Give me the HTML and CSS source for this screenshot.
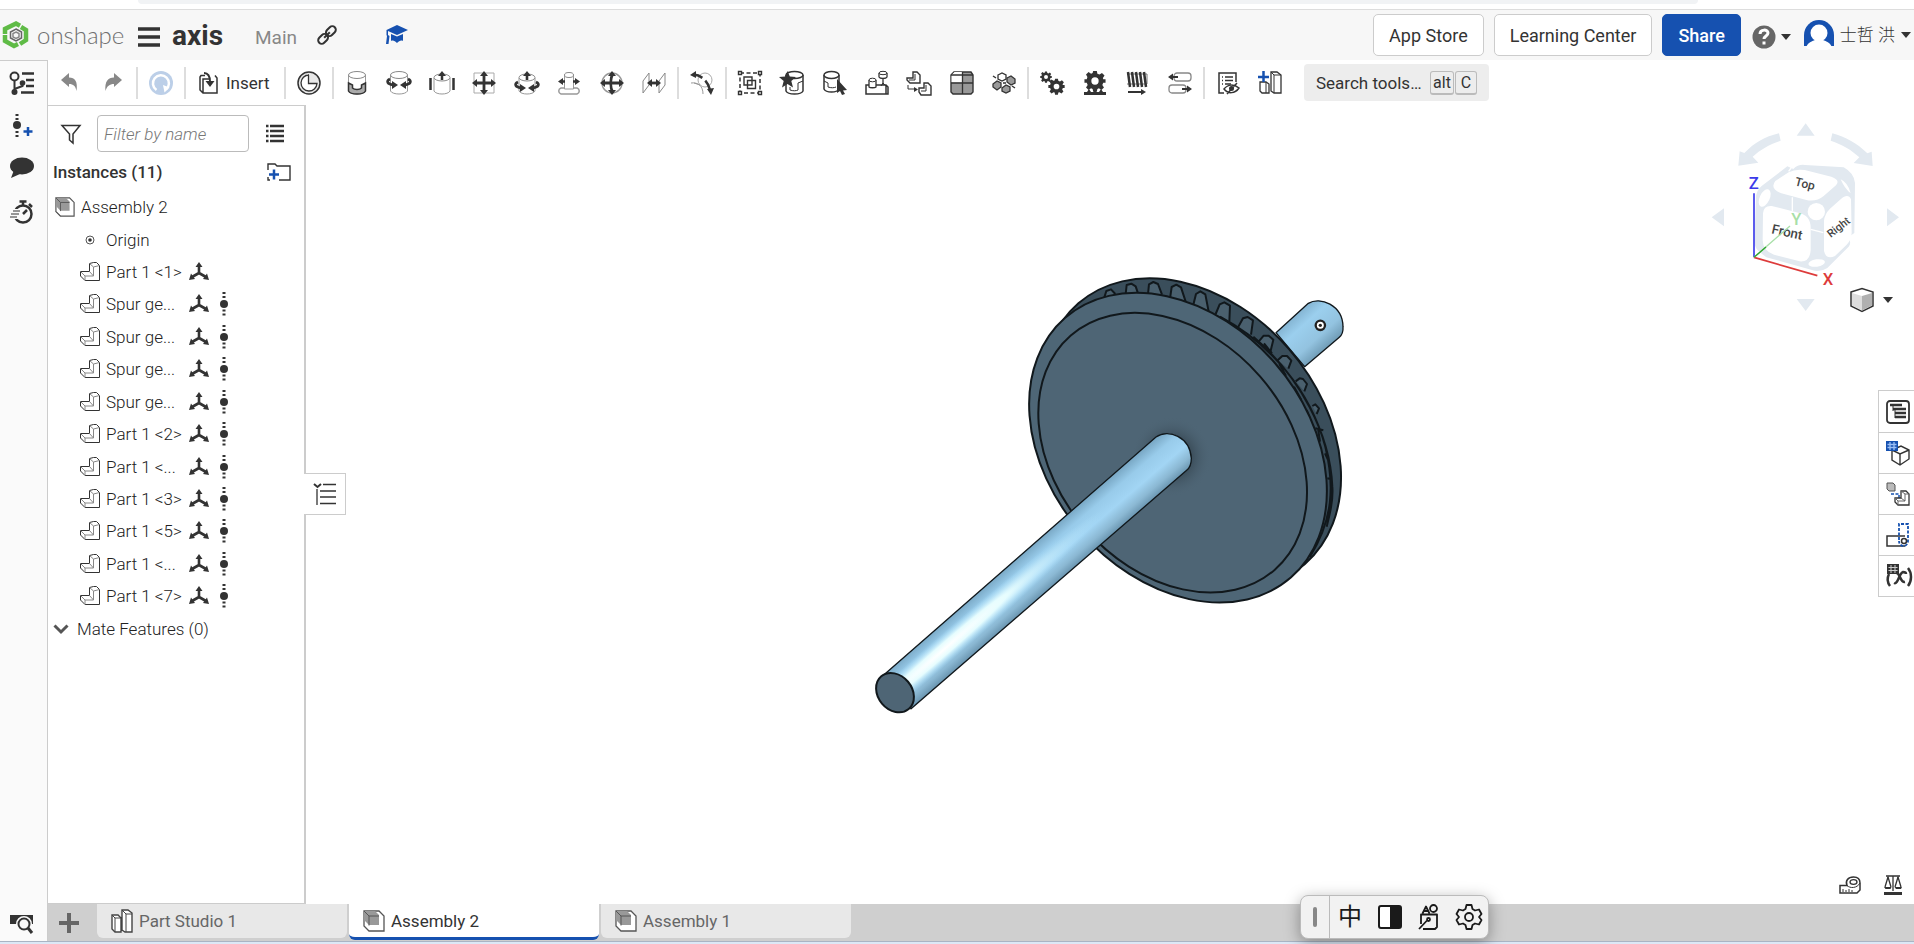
FILE: index.html
```html
<!DOCTYPE html>
<html lang="en">
<head>
<meta charset="utf-8">
<title>axis | Assembly 2</title>
<link rel="stylesheet" href="styles.css">
</head>
<body>
<svg class="defs" aria-hidden="true">
  <symbol id="i-lpart" viewBox="0 0 20 20"><path d="M.5 9.500H9.500V1.500L13.500.5h3L19.500 3.500v15H5L.5 14z" fill="#fff" stroke="#333"/><path d="M.5 9.500L5 14h8.500V5L9.500 1.500M13.500 5l6-1.500M5 14v4.500M13.500 14l-4-4.500" fill="none" stroke="#888"/></symbol>
  <symbol id="i-axes" viewBox="0 0 20 20"><path d="M10 3v9M10 11l-7 4M10 11l7 4" fill="none" stroke="#333" stroke-width="2.600"/><path d="M10 0l3.500 5h-7zM0 18l2-6.500 4 5.500zM20 18l-2-6.500-4 5.500z" fill="#333"/></symbol>
  <symbol id="i-dots" viewBox="0 0 10 24"><circle cx="5" cy="12" r="4" fill="#333"/><path d="M3.500 1h3M3.500 5h3M3.500 18.500h3M3.500 22.500h3" stroke="#333" stroke-width="2"/></symbol>
  <symbol id="i-asm" viewBox="0 0 22 22"><path d="M1 1h15l5 5v15H6l-5-5z" fill="#fff" stroke="#555" stroke-width="1.300"/><path d="M1 1h11l4 4v10H6l-5-5z" fill="#999"/><path d="M1 1l5 5h10M6 6v9.500M1 16l5 5" fill="none" stroke="#555"/></symbol>
  <symbol id="i-studio" viewBox="0 0 22 24"><path d="M1 6h6l3 3v14H4l-3-3zM11 1h6l4 3v19h-7l-3-2z" fill="#fff" stroke="#444" stroke-width="1.400"/><path d="M1 6l3 3h6M4 9v14M11 1l4 4h6M15 5v18" fill="none" stroke="#444"/></symbol>
  <symbol id="i-caret" viewBox="0 0 10 6"><path d="M0 0h10L5 6z" fill="#333"/></symbol>
  <symbol id="i-gear" viewBox="-12 -12 24 24"><path fill-rule="evenodd" d="M-2-11h4l.6 3 2.300 1 2.700-1.800 2.800 2.800L8.600-3.300 9-2h2.500v4H9l-1 2.300 1.800 2.700L7 9.800 4.300 8 2.600 8.600 2 11.500h-4l-.6-2.900L-4.300 8-7 9.800-9.800 7-8 4.300-9 2h-2.500v-4H-9l.7-2.300L-9.800-7-7-9.800-4.300-8l1.700-.6zM0-4a4 4 0 100 8 4 4 0 000-8z" fill="#333"/></symbol>
</svg>

<div class="app">
  <div class="browser-edge"><div class="browser-pill"></div></div>

  <header class="header">
    <a class="logo" href="#" aria-label="onshape">
      <svg width="26" height="28" viewBox="0 0 26 28"><g fill="none" stroke="#5fbb46" stroke-width="4.500"><path d="M2 13V8l11-5.500 4 2.200"/><path d="M2 14v6l9 5 4-2"/><path d="M18 6l5 3v10l-6 4"/></g><path d="M13 8l5.500 3v6L13 20l-5.500-3v-6z" fill="none" stroke="#666" stroke-width="1.500"/><path d="M13 11l3 1.500v3.500l-3 1.500-3-1.500v-3.500z" fill="none" stroke="#888" stroke-width="1.500"/></svg>
      <span>onshape</span>
    </a>
    <button class="icon-btn menu" aria-label="Menu"><svg width="22" height="20" viewBox="0 0 22 20"><path d="M0 2h22M0 10h22M0 18h22" stroke="#333" stroke-width="3.500"/></svg></button>
    <h1 class="doc-name">axis</h1>
    <span class="branch">Main</span>
    <button class="icon-btn link" aria-label="Copy link"><svg width="20" height="20" viewBox="0 0 20 20"><g fill="none" stroke="#333" stroke-width="2" transform="rotate(-45 10 10)"><rect x="-1" y="6.500" width="11" height="7" rx="3.500"/><rect x="10" y="6.500" width="11" height="7" rx="3.500"/><path d="M6 10h8"/></g></svg></button>
    <button class="icon-btn edu" aria-label="Education"><svg width="22" height="20" viewBox="0 0 22 20"><path d="M11 0l11 5-11 5L2 6v4l1.500 1-1 8H0l1-8-.5-1V5zM5 9l6 2.500L17 9v7c-2-1-4 0-6 2-2-2-4-3-6-2z" fill="#1651b0"/></svg></button>
    <div class="header-right">
      <button class="btn">App Store</button>
      <button class="btn">Learning Center</button>
      <button class="btn primary">Share</button>
      <button class="icon-btn help" aria-label="Help"><svg width="24" height="24" viewBox="0 0 24 24"><circle cx="12" cy="12" r="11.500" fill="#666"/><path d="M8 9c0-5 8-5 8-1 0 3-4 3-4 6" fill="none" stroke="#fff" stroke-width="3"/><path d="M10.500 16.500h3v3h-3z" fill="#fff"/></svg><svg width="10" height="6"><use href="#i-caret"/></svg></button>
      <button class="icon-btn account"><svg width="30" height="30" viewBox="0 0 30 30"><path d="M0 26V15a15 15 0 0130 0v11z" fill="#1651b0"/><circle cx="15" cy="13" r="8.500" fill="#fff"/><path d="M2 28c1-5 6-7 9-8h8c3 1 8 3 9 8l-5 2H7z" fill="#fff"/></svg><span>士哲 洪</span><svg width="10" height="6"><use href="#i-caret"/></svg></button>
    </div>
  </header>

  <div class="workspace">
    <nav class="rail">
      <button class="icon-btn" aria-label="Versions"><svg width="26" height="24" viewBox="0 0 26 24"><g fill="none" stroke="#333" stroke-width="2"><circle cx="5.500" cy="5.500" r="4"/><path d="M5.500 10v12M5.500 18l8-3v-4"/></g><circle cx="5.500" cy="21" r="3" fill="#333"/><circle cx="13.500" cy="12" r="2.800" fill="#333"/><path d="M13 2.500h12M17 9h8M17 15h8M12 21.500h13" stroke="#333" stroke-width="2.500"/></svg></button>
      <button class="icon-btn" aria-label="Add mate"><svg width="22" height="24" viewBox="0 0 22 24"><circle cx="6" cy="11" r="4" fill="#333"/><path d="M4.500 1h3M4.500 5h3M4.500 18h3M4.500 22h3" stroke="#333" stroke-width="2"/><path d="M12.500 17.500h9M17 13v9" stroke="#1651b0" stroke-width="2.500"/></svg></button>
      <button class="icon-btn" aria-label="Comments"><svg width="24" height="22" viewBox="0 0 24 22"><ellipse cx="12" cy="9" rx="12" ry="8.500" fill="#333"/><path d="M4 13l-3 8 9-4z" fill="#333"/></svg></button>
      <button class="icon-btn" aria-label="History"><svg width="24" height="26" viewBox="0 0 24 26"><circle cx="13" cy="16" r="8.500" fill="none" stroke="#333" stroke-width="2.500"/><path d="M9.500 3.500h7M13 4v4M19 6l3 3M13 16l4-4" stroke="#333" stroke-width="2.500"/><path d="M2 13h8M1 16h8M0 19h8" stroke="#fafafa" stroke-width="4"/><path d="M3 13h7M1 16h8M0 19h7" stroke="#333" stroke-width="1.200"/></svg></button>
      <button class="icon-btn last" aria-label="Search tabs"><svg width="24" height="20" viewBox="0 0 24 20"><path d="M0 1h23v9H0z" fill="#333"/><circle cx="14" cy="10" r="5.500" fill="#fafafa" stroke="#fafafa" stroke-width="5"/><circle cx="14" cy="10" r="5.500" fill="none" stroke="#333" stroke-width="2"/><path d="M18 14l4 5" stroke="#333" stroke-width="3"/></svg></button>
    </nav>

    <div class="stage">
      <div class="toolbar">
        <div class="tool-group history">
          <button class="tool" aria-label="Undo"><svg viewBox="0 0 24 24"><path d="M4 9l8-7v4.500c6 0 9 4 7.500 13.500-1-5-3-7-7.500-7V16z" fill="#888"/></svg></button>
          <button class="tool" aria-label="Redo"><svg viewBox="0 0 24 24"><path d="M21 9l-8-7v4.500c-6 0-9.500 4-8.500 13.500 1.500-5 4-7 8.500-7V16z" fill="#888"/></svg></button>
        </div>
        <span class="sep"></span>
        <button class="tool" aria-label="Update"><svg viewBox="0 0 24 24"><circle cx="12" cy="12" r="12" fill="#bccfe8"/><path d="M7.500 19A8 8 0 1117 18.500" fill="none" stroke="#fff" stroke-width="2.500"/><path d="M14 14l6.500 2.500-5 5z" fill="#fff"/></svg></button>
        <span class="sep"></span>
        <button class="insert"><svg width="20" height="22" viewBox="0 0 20 22"><path d="M6 3.500H2L1 5v13l3 3h14V6l-2-2.500M4 21V7h6" fill="none" stroke="#333" stroke-width="1.500"/><path d="M5 1c5 0 6 4 6 9" fill="none" stroke="#333" stroke-width="2"/><path d="M6.500 9h9L11 15z" fill="#333"/></svg><span>Insert</span></button>
        <span class="sep"></span>
        <button class="tool" aria-label="Animate"><svg viewBox="0 0 24 24"><circle cx="12" cy="12" r="11" fill="#e8e8e8" stroke="#333" stroke-width="1.500"/><path d="M12 4a8 8 0 108 8.500H11.500V4z" fill="#fff" stroke="#333" stroke-width="1.300"/></svg></button>
        <span class="sep"></span>
        <div class="tool-group mates">
          <button class="tool" aria-label="Fastened mate"><svg viewBox="0 0 24 24"><path d="M3.500 4v16c2 4 15 4 17 0V4" fill="#fff" stroke="#999"/><ellipse cx="12" cy="4" rx="8.500" ry="3.500" fill="#fff" stroke="#888"/><path d="M3.500 12l4 2v3c2 2 7 2 9 0v-3l4-2v8c-2 4-15 4-17 0z" fill="#aaa" stroke="#333" stroke-width="1.500"/></svg></button>
          <button class="tool" aria-label="Revolute mate"><svg viewBox="0 0 24 24"><path d="M3.500 4v16c2 4 15 4 17 0V4" fill="#fff" stroke="#999"/><ellipse cx="12" cy="4" rx="8.500" ry="3.500" fill="#fff" stroke="#888"/><path d="M3 8c-4 2-3 5 3 6M21 8c4 2 3 5-3 6" fill="none" stroke="#333" stroke-width="2.600"/><path d="M5 10l6 4-6 4zM19 10l-6 4 6 4z" fill="#333"/></svg></button>
          <button class="tool" aria-label="Slider mate"><svg viewBox="0 0 24 24"><path d="M4 7v13c2 4 14 4 16 0V7" fill="#fff" stroke="#999"/><ellipse cx="12" cy="6.500" rx="8" ry="3.500" fill="#fff" stroke="#888"/><path d="M.5 7v12M23.500 7v12M12 3v6" stroke="#333" stroke-width="2.500"/><path d="M12 0l4 5H8z" fill="#333"/></svg></button>
          <button class="tool" aria-label="Planar mate"><svg viewBox="0 0 24 24"><path d="M2 2h20v20H2z" fill="none" stroke="#aaa"/><path d="M12 3v18M3 12h18" stroke="#333" stroke-width="2.800"/><path d="M12 0l4 5H8zM12 24l4-5H8zM0 12l5-4v8zM24 12l-5-4v8z" fill="#333"/></svg></button>
          <button class="tool" aria-label="Cylindrical mate"><svg viewBox="0 0 24 24"><path d="M4 7v13c2 4 14 4 16 0V7" fill="#fff" stroke="#999"/><ellipse cx="12" cy="6.500" rx="8" ry="3.500" fill="#fff" stroke="#888"/><path d="M12 3v6M3 11c-4 2-3 5 3 6M21 11c4 2 3 5-3 6" fill="none" stroke="#333" stroke-width="2.600"/><path d="M12 0l4 5H8zM5 13l6 4-6 4zM19 13l-6 4 6 4z" fill="#333"/></svg></button>
          <button class="tool" aria-label="Pin slot mate"><svg viewBox="0 0 24 24"><path d="M7.500 4v14h9V4" fill="#fff" stroke="#999"/><ellipse cx="12" cy="4" rx="4.500" ry="2.500" fill="#fff" stroke="#888"/><path d="M7.500 17H4c-3 1-3 5 0 6h16c3-1 3-5 0-6h-3.500" fill="none" stroke="#999" stroke-width="1.500"/><path d="M3 10.500h5M16 10.500h5" stroke="#333" stroke-width="2.500"/><path d="M1 10.500l5-3.500v7zM23 10.500l-5-3.500v7z" fill="#333"/></svg></button>
          <button class="tool" aria-label="Ball mate"><svg viewBox="0 0 24 24"><circle cx="12" cy="12" r="10" fill="none" stroke="#999" stroke-width="1.500"/><path d="M13 2c-3 6-3 14 0 20M2 12h20" fill="none" stroke="#333" stroke-width="2.800"/><path d="M12 0l4 5H8zM12 24l4-5H8zM0 12l5-4v8zM24 12l-5-4v8z" fill="#333"/></svg></button>
          <button class="tool" aria-label="Parallel mate"><svg viewBox="0 0 24 24"><path d="M1 10l6-8v12l-6 8zM17 10l6-8v12l-6 8z" fill="none" stroke="#888"/><path d="M8 12h8" stroke="#333" stroke-width="2.800"/><path d="M5 12l5-4v8zM19 12l-5-4v8z" fill="#333"/></svg></button>
        </div>
        <span class="sep"></span>
        <button class="tool" aria-label="Tangent mate"><svg viewBox="0 0 24 24"><circle cx="15" cy="9" r="7" fill="none" stroke="#aaa"/><path d="M1 12c7-1 12 3 12 11M4 12l6 2" fill="none" stroke="#999"/><path d="M3 4c6-1 15 5 17 15" fill="none" stroke="#333" stroke-width="2.500" stroke-dasharray="10 4"/><path d="M0 4l6-4v7zM21 24l-4-6 7-1z" fill="#333"/></svg></button>
        <span class="sep"></span>
        <div class="tool-group assembly">
          <button class="tool" aria-label="Group"><svg viewBox="0 0 24 24"><path d="M2 2h20v20H2z" fill="none" stroke="#333" stroke-width="1.500" stroke-dasharray="4 2.500"/><path d="M.5.5h3v3h-3zM20.500.5h3v3h-3zM.5 20.500h3v3h-3zM20.500 20.500h3v3h-3zM9.500 9.500h8v8h-8zM6 6h8v8H6z" fill="#fff" stroke="#333" stroke-width="1.400"/></svg></button>
          <button class="tool" aria-label="Mate connector"><svg viewBox="0 0 24 24"><path d="M6 4v16c2 4 15 4 17 0V4" fill="#fff" stroke="#333" stroke-width="1.500"/><ellipse cx="14.500" cy="4" rx="8.500" ry="3.500" fill="#fff" stroke="#333" stroke-width="1.500"/><path d="M10 16v3c3 1 6 1 8 0v-7l5-2" fill="none" stroke="#333"/><path d="M7.500 0l2.300 5.500 6.200.5-4.700 4L13 16.500l-5.500-3.500L2 16.500 3.700 10-1 6l6.200-.5z" fill="#333"/></svg></button>
          <button class="tool" aria-label="Select part"><svg viewBox="0 0 24 24"><path d="M1 4v14c2 4 13 4 15 0V4" fill="#fff" stroke="#333" stroke-width="1.500"/><ellipse cx="8.500" cy="4" rx="7.500" ry="3.500" fill="#fff" stroke="#333" stroke-width="1.500"/><path d="M1 10l4 2v4c3 1 6 1 8 0" fill="none" stroke="#333"/><path d="M14 8l10 11-4 .5 2 3.500-3 1-2-4-3 2z" fill="#333"/></svg></button>
          <button class="tool" aria-label="Snap mode"><svg viewBox="0 0 24 24"><path d="M1 14h20l2 2v7H1zM21 14v9" fill="#fff" stroke="#333" stroke-width="1.500"/><path d="M4 9v7c1 1 6 1 7 0V9M14 2v4c1 2 7 2 8 0V2M18 8v6" fill="#fff" stroke="#333" stroke-width="1.300"/><ellipse cx="7.500" cy="9" rx="3.500" ry="1.800" fill="#fff" stroke="#333"/><ellipse cx="18" cy="2" rx="4" ry="1.700" fill="#fff" stroke="#333"/><path d="M16 15l2-3 3 3" fill="none" stroke="#333"/></svg></button>
          <button class="tool" aria-label="Replicate"><svg viewBox="0 0 24 24"><g fill="#fff" stroke="#333" stroke-width="1.400"><path d="M0 7h6V1h4l3 3v8H3L0 9z"/><path d="M12 17h5v-5h4l3 3v9H14l-2-3z"/></g><path d="M8 3v6H2M19 14v6h-5M1 14v4h7" fill="none" stroke="#333"/><path d="M7 16l4 2.500L7 21z" fill="#333"/></svg></button>
          <button class="tool" aria-label="Linear pattern"><svg viewBox="0 0 24 24"><path d="M1 4l3-3h17l2 3v17l-2 2H3l-2-2z" fill="#999" stroke="#333" stroke-width="1.400"/><path d="M1.500 4l3-3h8v10.500h-11z" fill="#fff"/><path d="M1 12h22M12.500 1v22M1 4h22" fill="none" stroke="#333" stroke-width="1.300"/></svg></button>
          <button class="tool" aria-label="Circular pattern"><svg viewBox="0 0 24 24"><g fill="#999" stroke="#333" stroke-width="1.300"><path d="M1 13l4-3 4 2v4l-4 3-4-3zM10 17l4-3 4 2v4l-4 2-4-2zM15 7l4-2 4 3v4l-4 2-4-3z"/><path d="M6 4l4-2 4 2v4l-4 2-4-2z" fill="#fff"/></g><path d="M1 5l3 2M20 15l3 2M11 12h3" stroke="#333" stroke-width="1.500"/></svg></button>
        </div>
        <span class="sep"></span>
        <div class="tool-group relations">
          <button class="tool" aria-label="Gear relation"><svg viewBox="0 0 24 24"><use href="#i-gear" width="12" height="12"/><use href="#i-gear" x="8" y="7" width="17" height="17"/></svg></button>
          <button class="tool" aria-label="Rack and pinion"><svg viewBox="0 0 24 24"><use href="#i-gear" x="1" y="-1" width="22" height="22"/><path d="M1 24v-3h3l2-3 2 3h2l2-2 2 2h2l2-3 2 3h3v3z" fill="#333"/></svg></button>
          <button class="tool" aria-label="Screw relation"><svg viewBox="0 0 24 24"><path d="M2 3h20v10H2" fill="none" stroke="#777"/><path d="M3 1l2 15M7 1l2 15M11 1l2 15M15 1l2 15M19 1l2 15" stroke="#333" stroke-width="2.500"/><path d="M3 21h15" stroke="#333" stroke-width="2"/><path d="M16 18l5 3-5 3z" fill="#333"/></svg></button>
          <button class="tool" aria-label="Linear relation"><svg viewBox="0 0 24 24"><g fill="#fff" stroke="#888" stroke-width="1.300"><rect x="6" y="2" width="17" height="8" rx="3"/><rect x="1" y="14" width="17" height="8" rx="3"/></g><path d="M5 6h5M14 18h5" stroke="#333" stroke-width="2"/><path d="M0 6l5-3.500v7zM24 18l-5-3.500v7z" fill="#333"/></svg></button>
        </div>
        <span class="sep"></span>
        <div class="tool-group extras">
          <button class="tool" aria-label="Hide items"><svg viewBox="0 0 24 24"><path d="M8 22H3V2h17v9M6 6h1M6 9.500h1M6 13h1M9 6h8M9 9.500h8M9 13h6" fill="none" stroke="#333" stroke-width="1.500"/><path d="M8 18c4-5 10-5 15-1-4 6-11 6-15 1zM21 12L11 23" fill="none" stroke="#333" stroke-width="1.500"/><circle cx="15.500" cy="17.500" r="2.500" fill="#333"/></svg></button>
          <button class="tool" aria-label="New part studio"><svg viewBox="0 0 24 24"><path d="M2 11h6l3 2v9H4l-2-2zM13 1h6l4 3v18h-7l-3-2z" fill="#fff" stroke="#333" stroke-width="1.300"/><path d="M13 1l3 3h7M16 4v18M8 11v11" fill="none" stroke="#333"/><path d="M0 6h11M5.500 0v11" stroke="#1651b0" stroke-width="2.500"/></svg></button>
        </div>
        <button class="search"><span>Search tools…</span><kbd>alt</kbd><kbd>C</kbd></button>
      </div>

      <div class="editor">
        <aside class="panel">
          <div class="filter">
            <svg width="20" height="20" viewBox="0 0 20 20"><path d="M1 1.500h18l-7 8.500v9l-3.500-3V10z" fill="none" stroke="#333" stroke-width="1.500"/></svg>
            <input type="text" placeholder="Filter by name" aria-label="Filter by name">
            <button class="icon-btn" aria-label="List view"><svg width="18" height="20" viewBox="0 0 18 20"><path d="M0 2h2.500M0 7h2.500M0 12h2.500M0 17h2.500M4 2h14M4 7h14M4 12h14M4 17h14" stroke="#333" stroke-width="2.500"/></svg></button>
          </div>
          <div class="panel-title"><h2>Instances (11)</h2><button class="icon-btn" aria-label="New folder"><svg width="24" height="18" viewBox="0 0 24 18"><path d="M1 7V1h7l2 2h13v14H12M1 14v3h2" fill="none" stroke="#333" stroke-width="1.400"/><path d="M2 11.500h10M7 6.500v10" stroke="#1651b0" stroke-width="2.500"/></svg></button></div>
          <ul class="tree">
            <li><svg class="ic"><use href="#i-asm"/></svg><span>Assembly 2</span></li>
            <li class="child"><svg class="ic" viewBox="0 0 20 20"><circle cx="10" cy="10" r="4" fill="none" stroke="#555"/><circle cx="10" cy="10" r="1.800" fill="#333"/></svg><span class="name">Origin</span></li>
            <li class="child"><svg class="ic"><use href="#i-lpart"/></svg><span class="name">Part 1 &lt;1&gt;</span><svg class="ic"><use href="#i-axes"/></svg></li>
            <li class="child"><svg class="ic"><use href="#i-lpart"/></svg><span class="name">Spur ge...</span><svg class="ic"><use href="#i-axes"/></svg><svg class="dots"><use href="#i-dots"/></svg></li>
            <li class="child"><svg class="ic"><use href="#i-lpart"/></svg><span class="name">Spur ge...</span><svg class="ic"><use href="#i-axes"/></svg><svg class="dots"><use href="#i-dots"/></svg></li>
            <li class="child"><svg class="ic"><use href="#i-lpart"/></svg><span class="name">Spur ge...</span><svg class="ic"><use href="#i-axes"/></svg><svg class="dots"><use href="#i-dots"/></svg></li>
            <li class="child"><svg class="ic"><use href="#i-lpart"/></svg><span class="name">Spur ge...</span><svg class="ic"><use href="#i-axes"/></svg><svg class="dots"><use href="#i-dots"/></svg></li>
            <li class="child"><svg class="ic"><use href="#i-lpart"/></svg><span class="name">Part 1 &lt;2&gt;</span><svg class="ic"><use href="#i-axes"/></svg><svg class="dots"><use href="#i-dots"/></svg></li>
            <li class="child"><svg class="ic"><use href="#i-lpart"/></svg><span class="name">Part 1 &lt;...</span><svg class="ic"><use href="#i-axes"/></svg><svg class="dots"><use href="#i-dots"/></svg></li>
            <li class="child"><svg class="ic"><use href="#i-lpart"/></svg><span class="name">Part 1 &lt;3&gt;</span><svg class="ic"><use href="#i-axes"/></svg><svg class="dots"><use href="#i-dots"/></svg></li>
            <li class="child"><svg class="ic"><use href="#i-lpart"/></svg><span class="name">Part 1 &lt;5&gt;</span><svg class="ic"><use href="#i-axes"/></svg><svg class="dots"><use href="#i-dots"/></svg></li>
            <li class="child"><svg class="ic"><use href="#i-lpart"/></svg><span class="name">Part 1 &lt;...</span><svg class="ic"><use href="#i-axes"/></svg><svg class="dots"><use href="#i-dots"/></svg></li>
            <li class="child"><svg class="ic"><use href="#i-lpart"/></svg><span class="name">Part 1 &lt;7&gt;</span><svg class="ic"><use href="#i-axes"/></svg><svg class="dots"><use href="#i-dots"/></svg></li>
            <li class="mates-row"><svg width="16" height="10" viewBox="0 0 16 10"><path d="M1.500 1.500L8 8l6.500-6.500" fill="none" stroke="#555" stroke-width="3"/></svg><span>Mate Features (0)</span></li>
          </ul>
        </aside>

        <main class="canvas">
          <button class="flyout" aria-label="Toggle list"><svg width="24" height="24" viewBox="0 0 24 24"><path d="M1 2l3.500 3L8 2" fill="none" stroke="#333" stroke-width="2"/><path d="M10 2.500h13M7 9h16M7 15h16M7 21.500h16M4 7v16" stroke="#333" stroke-width="1.300"/></svg></button>

          <svg class="model" viewBox="0 0 1500 1380" role="img" aria-label="Gear on shaft">
            <defs>
              <linearGradient id="g-shaft" gradientUnits="userSpaceOnUse" x1="480" y1="888" x2="568" y2="990"><stop offset="0" stop-color="#7aa9c6"/><stop offset=".25" stop-color="#98cbea"/><stop offset=".55" stop-color="#a2d5f4"/><stop offset=".8" stop-color="#8bb8d3"/><stop offset="1" stop-color="#6792ad"/></linearGradient>
              <radialGradient id="g-shine" gradientUnits="userSpaceOnUse" cx="0" cy="0" r="1" gradientTransform="translate(250 1170) rotate(-41) scale(640 40)"><stop offset="0" stop-color="#fff"/><stop offset=".4" stop-color="#eaffff" stop-opacity=".95"/><stop offset="1" stop-color="#b0e4ff" stop-opacity="0"/></radialGradient>
              <linearGradient id="g-back" gradientUnits="userSpaceOnUse" x1="1295" y1="170" x2="1390" y2="275"><stop offset="0" stop-color="#82b2d0"/><stop offset=".3" stop-color="#9bcfee"/><stop offset=".7" stop-color="#93c3e0"/><stop offset="1" stop-color="#6f9bb5"/></linearGradient>
              <radialGradient id="g-ao" gradientUnits="userSpaceOnUse" cx="935" cy="590" r="120"><stop offset=".3" stop-color="#2c3a44"/><stop offset="1" stop-color="#4e6575" stop-opacity="0"/></radialGradient>
              <linearGradient id="g-edge" gradientUnits="userSpaceOnUse" x1="1000" y1="100" x2="1440" y2="700"><stop offset="0" stop-color="#3a4e5b"/><stop offset=".4" stop-color="#4d6676"/><stop offset="1" stop-color="#3c5260"/></linearGradient>
            </defs>
            <g stroke="#11181c" stroke-width="6" stroke-linejoin="round">
              <path d="M1248 218L1345 130C1380 108 1448 135 1449 200 1450 215 1445 226 1438 232L1334 320z" fill="url(#g-back)" stroke-width="4"/>
              <ellipse rx="518" ry="387" transform="translate(995 521) rotate(49)" fill="url(#g-edge)"/>
              <g fill="#4a606e">
                <path d="M733 112l6-19 14-5 13 14"/>
                <path d="M797 102l3-27 14-4 13 8 8 24"/>
                <path d="M864 102l3-29 13-7 14 6 12 32"/>
                <path d="M930 116l5-35 14-7 14 8 15 46"/>
                <path d="M1000 134l8-32 13-8 15 9 10 52"/>
                <path d="M1067 162l12-29 14-6 17 10-2 48"/>
                <path d="M1133 204l16-29 14-4 16 10-6 43"/>
                <path d="M1194 247l17-20 15 0 14 12-9 37"/>
                <path d="M1253 301l14-13 14 0 13 14-9 24"/>
                <path d="M1307 364l12-9 10 2 12 15-8 22"/>
                <path d="M1357 438l9-5 11 12-7 17"/>
              </g>
              <path d="M1080 170C1230 250 1350 390 1396 560 1425 680 1418 780 1350 890M1180 230C1320 350 1410 520 1417 680 1420 720 1410 760 1400 800M1212 250l24 30M1258 312l20 35M1302 380l22 40M1340 450l16 44M1366 505l24 6M1380 545l-6-40M1395 580l10 22M1402 655l12 3" fill="none"/>
              <ellipse rx="516" ry="386" transform="translate(954 563) rotate(49)" fill="#4e6676"/>
              <ellipse rx="466" ry="348" transform="translate(938 578) rotate(49)" fill="#4e6575"/>
            </g>
            <circle cx="935" cy="590" r="120" fill="url(#g-ao)"/>
            <path d="M72 1244L888 531C925 505 990 530 994 595 994 612 988 625 980 631L153 1346z" fill="url(#g-shaft)" stroke="#11181c" stroke-width="4"/>
            <path d="M72 1244L888 531C925 505 990 530 994 595 994 612 988 625 980 631L153 1346z" fill="url(#g-shine)"/>
            <ellipse rx="64" ry="51" transform="translate(105 1298) rotate(50)" fill="#4e6575" stroke="#11181c" stroke-width="6"/>
            <circle cx="1381" cy="196" r="14" fill="#fff" stroke="#222" stroke-width="7"/><circle cx="1381" cy="196" r="5" fill="#222"/>
          </svg>

          <svg class="view-cube" viewBox="0 0 672 660" role="img" aria-label="View cube">
            <g fill="#e2e9f0"><path d="M347 40l27 37h-54zM347 603l27-36h-54zM65 322l37-27v54zM627 322l-36-27v54z"/>
            <path d="M267 70l5 22c-35 12-60 26-84 48l17 18-60 9 4-43 14 5c32-32 60-48 104-59zM427 70l-5 22c35 12 62 27 86 50l-17 17 57 9-3-43-13 5c-34-33-64-48-105-60z"/>
            <path d="M292 169L215 228q-18 14-17 40l-5 128q1 18 16 30l20 16 145 40q22 3 38-8l64-64q8-10 2-20l-7-5 22-16 2-150q-3-30-34-47L345 165q-20-3-35 12z"/></g>
            <g fill="#fff"><path d="M256 213l40-26q20-11 48-7l80 20q28 10 14 26l-37 32q-22 18-52 12l-75-20q-36-14-18-37zM219 310q2-24 26-22l80 20q37 8 37 45v67q-2 37-33 34l-77-20q-34-12-34-44zM402 332q2-20 18-36l32-28q22-20 31 0l2 100q0 20-15 36l-35 34q-27 12-33-15z"/><circle cx="379" cy="305" r="26"/><ellipse cx="224" cy="264" rx="15" ry="28" transform="rotate(25 224 264)"/><ellipse cx="380" cy="459" rx="25" ry="11" transform="rotate(-8 380 459)"/><path d="M452 208q22 10 30 42-18-14-30-42z"/></g>
            <path d="M307 262v42M362 358l38 10M296 184l9-13M484 388l9-7" fill="none" stroke="#fff" stroke-width="4"/>
            <g class="face"><text x="0" y="0" transform="translate(243 370) rotate(12)" font-size="40">Front</text><text x="0" y="0" transform="translate(313 226) rotate(14)" font-size="36">Top</text><text x="0" y="0" transform="translate(422 384) rotate(-38)" font-size="33">Right</text></g>
            <path d="M192 442V250" stroke="#3b3bea" stroke-width="5"/><path d="M192 442L382 497" stroke="#dd3b3b" stroke-width="5"/><path d="M192 442l108-94" stroke="#a8dfa8" stroke-width="4"/><path d="M192 442l36-31" stroke="#2fa52f" stroke-width="4"/>
            <g class="axis"><text x="176" y="238" fill="#3b3bea">Z</text><text x="398" y="525" fill="#dd3b3b">X</text><text x="304" y="344" fill="#a8dfa8">Y</text></g>
          </svg>

          <button class="icon-btn shading" aria-label="Display mode"><svg width="24" height="24" viewBox="0 0 24 24"><path d="M1 4l11-3.500L23 4v14l-11 5.500L1 18z" fill="#fff" stroke="#333" stroke-width="1.500"/><path d="M2 5l10 3v14.500L2 17.500z" fill="#ddd"/><path d="M12 8l10-3v12.500l-10 5z" fill="#b0b0b0"/></svg><svg width="10" height="6"><use href="#i-caret"/></svg></button>

          <div class="side-tools">
            <button aria-label="Configurations"><svg width="24" height="24" viewBox="0 0 24 24"><rect x="1" y="1" width="22" height="22" rx="3" fill="#fff" stroke="#333" stroke-width="1.800"/><path d="M4 5h12M7 9h13M9 13h11M9 17h11" stroke="#333" stroke-width="2.500"/><path d="M7 6v5M9 9v9" stroke="#333"/></svg></button>
            <button aria-label="Bill of materials"><svg width="24" height="24" viewBox="0 0 24 24"><path d="M6 9l9-4 8 4v9l-9 6-8-5zM6 9l8 4 9-4M14 13v11" fill="#fff" stroke="#333" stroke-width="1.400"/><path d="M0 0h12v10H0z" fill="#1651b0"/><path d="M1.500 3.500h9M1.500 6.500h9M4 1v8M8 1v8" stroke="#9cc0f5" stroke-width="1.300"/></svg></button>
            <button aria-label="Exploded views"><svg width="24" height="24" viewBox="0 0 24 24"><path d="M1 1h6l2 2v6H3L1 7z" fill="#bbb" stroke="#555"/><path d="M5 12h8v4" fill="none" stroke="#1651b0" stroke-width="1.500" stroke-dasharray="3 1.500"/><path d="M9 16h6V9h5l3 3v11H12l-3-3z" fill="#fff" stroke="#333" stroke-width="1.300"/><path d="M9 16l3 3h7v-7h4M12 19v4M15 16l4 3M15 9l4 3" fill="none" stroke="#666"/></svg></button>
            <button aria-label="Named positions"><svg width="24" height="24" viewBox="0 0 24 24"><path d="M19 13H1v10h18" fill="#fff" stroke="#333" stroke-width="1.500"/><path d="M13 17V1h9v17a4.500 5 0 01-9 0" fill="none" stroke="#1651b0" stroke-width="1.800" stroke-dasharray="3 1.500"/><circle cx="18" cy="18" r="2.500" fill="#fff" stroke="#333" stroke-width="1.500"/></svg></button>
            <button aria-label="Variables"><svg width="26" height="24" viewBox="0 0 26 24"><path d="M3 10c-2 4-2 8 1 12M22 4c4 5 4 13 0 18" fill="none" stroke="#333" stroke-width="2.500"/><path d="M1 0h12v10H1z" fill="#333"/><path d="M2.500 3.500h9M2.500 6.500h9M5 1v8M9 1v8" stroke="#ccc"/><path d="M8 19c4 2 5-10 9-11 2 0 3 1 3 2M10 9c4-1 4 10 9 9" fill="none" stroke="#333" stroke-width="2.500"/></svg></button>
          </div>

          <div class="measure">
            <button class="icon-btn" aria-label="Measure"><svg width="22" height="18" viewBox="0 0 22 18"><path d="M1 9.500h7C6 5 9 1 14.500 1S21 4 21 7v7l-3 3H1z" fill="#fff" stroke="#333" stroke-width="1.500"/><path d="M8 9.500c3 3 10 3 13-2.500" fill="none" stroke="#333"/><ellipse cx="14.500" cy="6" rx="3.500" ry="2.300" fill="none" stroke="#333" stroke-width="1.300"/><path d="M4 16v-3M7 16v-2M10 16v-3M13 16v-2" stroke="#333"/></svg></button>
            <button class="icon-btn" aria-label="Mass properties"><svg width="18" height="20" viewBox="0 0 18 20"><path d="M2 1h14M9 1v15M4 2L1 12M4 2l3 10M14 2l-3 10M14 2l3 10" fill="none" stroke="#333" stroke-width="1.300"/><path d="M0 12h7.500l-1 2h-5zM10.500 12H18l-1 2h-5zM0 17h18v3H0z" fill="#333"/></svg></button>
          </div>
        </main>
      </div>

      <footer class="tabs">
        <button class="icon-btn add" aria-label="Add tab"><svg width="20" height="20" viewBox="0 0 20 20"><path d="M0 10h20M10 0v20" stroke="#666" stroke-width="4"/></svg></button>
        <button class="tab"><svg width="22" height="24"><use href="#i-studio"/></svg><span>Part Studio 1</span></button>
        <button class="tab active"><svg width="22" height="22"><use href="#i-asm"/></svg><span>Assembly 2</span></button>
        <button class="tab"><svg width="22" height="22"><use href="#i-asm"/></svg><span>Assembly 1</span></button>
      </footer>
    </div>
  </div>
  <div class="os-edge"></div>

  <div class="ime">
    <span class="grip"><i></i></span>
    <button class="icon-btn mode">中</button>
    <button class="icon-btn" aria-label="Half width"><svg width="24" height="24" viewBox="0 0 24 24"><rect x="1" y="1" width="22" height="22" rx="2" fill="#fff" stroke="#1a1a1a" stroke-width="2"/><path d="M12 1h11v22H12z" fill="#1a1a1a"/></svg></button>
    <button class="icon-btn" aria-label="Handwriting"><svg width="22" height="26" viewBox="0 0 22 26"><g fill="none" stroke="#1a1a1a" stroke-width="1.800" stroke-linejoin="round"><path d="M3 20V10.500h16V23l-2 2H5M1 25l8-8.500M4.500 9.500L8 2.500l3.500 7M6 7h4"/><circle cx="15.500" cy="4.500" r="3.500"/><circle cx="10.500" cy="15.500" r="1.500"/></g></svg></button>
    <button class="icon-btn" aria-label="Settings"><svg width="26" height="26" viewBox="-13 -13 26 26"><path d="M-2.500-12h5l1 4L6-6.500l4-1L12.500-3 10 0l2.500 3L10 7.500l-4-1L3.500 8l-1 4h-5l-1-4L-6 6.500l-4 1L-12.500 3-10 0l-2.500-3L-10-7.500l4 1L-3.500-8z" fill="none" stroke="#1a1a1a" stroke-width="1.800" stroke-linejoin="round"/><circle r="4" fill="none" stroke="#1a1a1a" stroke-width="1.800"/></svg></button>
  </div>
</div>
</body>
</html>
```
FILE: styles.css
```css
* { box-sizing: border-box; }
body {
  margin: 0;
  background: #fff;
  color: #333;
  font: 17px/20px Roboto, "Noto Sans CJK TC", sans-serif;
}
button { margin: 0; padding: 0; border: 0; background: none; color: inherit; font: inherit; cursor: pointer; }
svg { display: block; flex: none; overflow: visible; }
h1, h2, ul { margin: 0; padding: 0; }
.defs { position: absolute; width: 0; height: 0; }
.icon-btn { display: flex; align-items: center; justify-content: center; }

.app { position: relative; display: flex; flex-direction: column; height: 100vh; overflow: hidden; }
.browser-edge { flex: none; height: 10px; padding: 0 216px 0 138px; border-bottom: 1px solid #ddd; }
.browser-pill { height: 4px; border-radius: 0 0 12px 12px; background: #f1f3f5; }

/* Header */
.header { flex: none; display: flex; align-items: center; height: 50px; padding: 0 3px; background: #f7f7f7; }
.logo { display: flex; align-items: center; gap: 8px; color: #707070; font: 300 24px/30px Lato, sans-serif; text-decoration: none; }
.logo span { width: 87px; }
.menu { margin-left: 14px; padding-top: 4px; }
.doc-name { width: 54px; margin-left: 12px; padding-top: 2px; font-size: 28px; line-height: 32px; }
.branch { width: 42px; margin-left: 29px; padding-top: 6px; color: #888; font-size: 19px; }
.link { margin-left: 20px; }
.edu { margin-left: 49px; }
.header-right { display: flex; align-items: center; gap: 10px; margin-left: auto; }
.btn { height: 42px; padding: 1px 15px 0; border: 1px solid #ccc; border-radius: 5px; background: #fff; font-size: 18px; }
.btn.primary { border-color: #1651b0; background: #1651b0; color: #fff; font-weight: 500; }
.help { gap: 5px; margin-left: 1px; padding-top: 4px; }
.account { gap: 6px; margin-left: 3px; font-weight: 300; }

/* Left rail */
.workspace { flex: 1; min-height: 0; display: flex; }
.rail { flex: none; display: flex; flex-direction: column; align-items: center; gap: 19px; width: 48px; padding: 10px 3px 7px 0; border: solid #ccc; border-width: 1px 1px 0 0; background: #fafafa; }
.rail .last { margin-top: auto; }
.stage { flex: 1; min-width: 0; display: flex; flex-direction: column; }

/* Toolbar */
.toolbar { flex: none; display: flex; align-items: center; height: 45px; padding-left: 9px; }
.sep { flex: none; width: 2px; height: 32px; margin: 0 11px; background: #ddd; }
.tool, .tool svg { width: 24px; height: 24px; }
.tool-group { display: flex; justify-content: space-between; }
.history { width: 68px; }
.mates { width: 321px; }
.assembly { width: 278px; }
.relations { width: 152px; }
.extras { width: 66px; }
.insert { display: flex; align-items: center; gap: 7px; width: 76px; padding-left: 2px; }
.search { display: flex; align-items: center; height: 37px; margin-left: 22px; padding: 0 12px; border-radius: 4px; background: #ededed; }
.search span { width: 114px; text-align: left; }
kbd { width: 24px; border: 1px solid #bbb; border-bottom-width: 2px; border-radius: 3px; font: 16px/21px Roboto, sans-serif; }
kbd + kbd { width: 22px; margin-left: 1px; }

/* Instance list */
.editor { flex: 1; min-height: 0; display: flex; }
.panel { flex: none; display: flex; flex-direction: column; width: 258px; padding-top: 9px; border: solid #ccc; border-width: 1px 2px 1px 0; }
.filter { display: flex; align-items: center; padding: 0 20px 0 13px; }
.filter input { flex: 1; min-width: 0; height: 37px; margin: 0 17px 0 16px; padding: 0 6px; border: 1px solid #bbb; border-radius: 4px; font: inherit; }
.filter input::placeholder { color: #777; font-style: italic; font-weight: 300; }
.panel-title { display: flex; align-items: center; justify-content: space-between; height: 38px; padding: 2px 13px 0 5px; }
h2 { font-size: 17px; font-weight: 500; line-height: 20px; }
.tree { display: grid; grid-auto-rows: 1fr; height: 455px; padding-top: 1px; font-weight: 300; color: #222; list-style: none; }
.tree li { display: flex; align-items: center; gap: 6px; padding-left: 7px; white-space: nowrap; }
.tree .child { padding-left: 32px; }
.tree .mates-row { gap: 8px; padding-left: 5px; }
.ic { width: 20px; height: 20px; }
.name { width: 77px; }
.dots { width: 10px; height: 24px; margin-left: 4px; }

/* Canvas */
.canvas { position: relative; flex: 1; min-width: 0; display: grid; place-items: center; padding-bottom: 29px; }
.model { width: 500px; height: 460px; }
.flyout { position: absolute; top: 368px; left: -2px; padding: 8px 8px 8px 9px; border: 1px solid #ccc; border-left: 0; background: #fff; }
.view-cube { position: absolute; top: 5px; right: 0; width: 224px; height: 220px; }
.face { fill: #444; font-weight: 500; }
.axis { font-size: 50px; font-weight: 500; }
.shading { position: absolute; top: 183px; right: 21px; gap: 9px; }
.side-tools { position: absolute; top: 285px; right: 0; display: flex; flex-direction: column; width: 36px; border: 1px solid #ccc; border-right: 0; background: #fff; }
.side-tools button { height: 41px; padding-left: 7px; }
.side-tools button + button { border-top: 1px solid #ccc; }
.measure { position: absolute; right: 12px; bottom: 9px; display: flex; gap: 23px; }

/* Tabs */
.tabs { flex: none; display: flex; align-items: flex-start; gap: 2px; height: 37px; background: #cfcfcf; }
.add { width: 47px; height: 37px; padding-right: 5px; }
.tab { display: flex; align-items: center; gap: 6px; width: 250px; height: 34px; padding-left: 14px; border-radius: 0 0 6px 6px; background: #e8e8e8; color: #666; }
.tab.active { height: 36px; border-bottom: 3px solid #1651b0; background: #fff; color: #333; }
.os-edge { flex: none; height: 3px; border-top: 1px solid #aab4c4; background: #dce8f6; }

/* Input method bar */
.ime { position: absolute; right: 425px; bottom: 5px; display: flex; align-items: center; gap: 16px; width: 189px; height: 44px; padding-right: 6px; border: 1px solid #bbb; border-radius: 8px; background: #f2f2f2; box-shadow: 0 4px 16px rgba(0, 0, 0, .35); color: #1a1a1a; }
.grip { flex: none; display: flex; align-items: center; justify-content: center; width: 29px; height: 42px; margin-right: -8px; border-right: 1px solid #bbb; }
.grip i { width: 4px; height: 20px; border-radius: 2px; background: #888; }
.mode { width: 24px; font-size: 24px; }
```
